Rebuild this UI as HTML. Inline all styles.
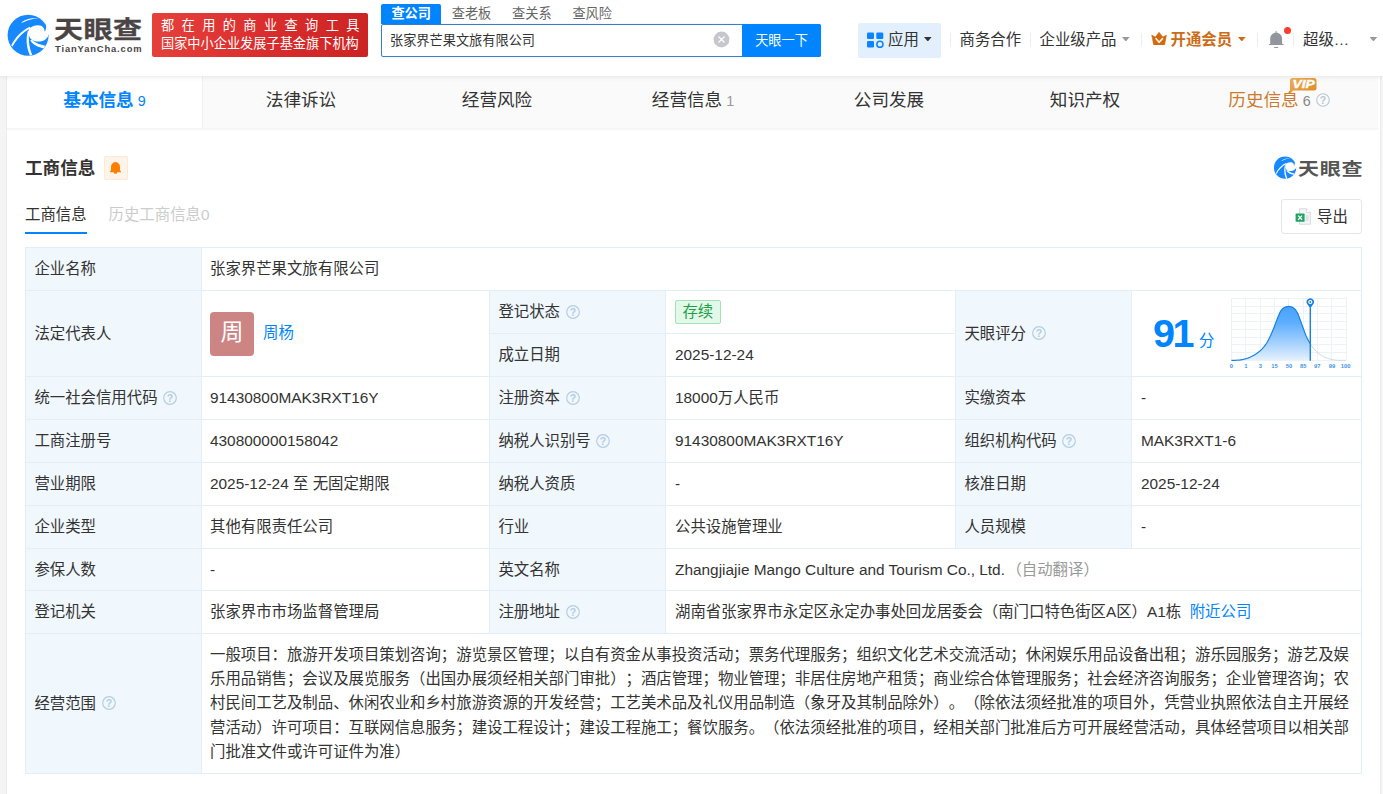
<!DOCTYPE html>
<html lang="zh-CN">
<head>
<meta charset="utf-8">
<title>张家界芒果文旅有限公司 - 天眼查</title>
<style>
*{box-sizing:border-box;margin:0;padding:0}
html,body{width:1383px;height:794px;overflow:hidden}
body{background:#f5f5f5;font-family:"Liberation Sans","Noto Sans CJK SC",sans-serif;color:#333;font-size:15.4px;position:relative;text-spacing-trim:space-all}
a{color:#0084ff;text-decoration:none}
svg{display:block}
/* header */
#hd{position:absolute;left:0;top:0;width:1383px;height:76px;background:#fff;box-shadow:0 1px 5px rgba(0,0,0,.09);z-index:5}
#logo{position:absolute;left:4px;top:10px;width:52px;height:50px}
#lt1{position:absolute;left:54px;top:9.7px;font-size:26px;line-height:40px;font-weight:700;color:#4a4444;letter-spacing:.5px;white-space:nowrap;transform-origin:0 50%;transform:scale(1.115,.9);-webkit-text-stroke:.35px #4a4444}
#lt2{position:absolute;left:55px;top:43px;font-size:9.4px;line-height:12px;font-weight:bold;color:#4a4444;letter-spacing:.86px;white-space:nowrap}
#slogan{position:absolute;left:152px;top:13px;width:216px;height:44px;border-radius:2px;background:linear-gradient(100deg,#e6413b 0%,#d92d2d 55%,#cb2323 100%);color:#fff;font-size:13.2px;line-height:17.5px;padding:4px 0 0 9px;white-space:nowrap}
#slogan .l1{letter-spacing:7.4px}
#stabs{position:absolute;left:381px;top:4px;height:20px;font-size:13.2px;line-height:20px;color:#666;white-space:nowrap}
#stabs span{display:inline-block;padding:0 10.4px;height:20px;vertical-align:top}
#stabs span.on{background:#0084ff;color:#fff;font-weight:bold;border-radius:2px 2px 0 0}
#sbox{position:absolute;left:381px;top:24px;width:440px;height:33px;border:1px solid #3a80c6;border-radius:2px;background:#fff;box-shadow:0 0 2px rgba(0,132,255,.18)}
#sbox .q{position:absolute;left:8px;top:0;line-height:32px;font-size:13.2px;color:#333}
#sbox .clr{position:absolute;left:330.5px;top:6px;width:17px;height:17px}
#sbtn{position:absolute;left:742px;top:24px;width:79px;height:33px;background:#0084ff;color:#fff;font-size:13.2px;line-height:33px;text-align:center;border-radius:0 2px 2px 0}
#app{position:absolute;left:858px;top:23px;width:83px;height:35px;background:#e2f0fd;border-radius:2px}
.it{position:absolute;top:29px;line-height:22px;white-space:nowrap;font-size:15.4px;color:#333}
.car{position:absolute;top:37.1px;width:7.6px;height:4.4px;background:#999;clip-path:polygon(0 0,100% 0,50% 100%)}
.vsep{position:absolute;top:33px;width:1px;height:13px;background:#eaecf1}
/* main */
#main{position:absolute;left:7px;top:76px;width:1373px;height:718px;background:#fff;box-shadow:-1px 0 0 #ececec,1px 0 0 #ececec}
#tabs{position:absolute;left:0;top:0;width:1371px;height:54px;background:#fafafa;border-bottom:2px solid #f6f6f6}
#tabs .t{position:absolute;top:0;width:196px;height:52px;line-height:49px;font-size:17.6px;color:#333;white-space:nowrap;text-align:center}
#tabs .t.on{background:#fff;color:#0084ff;font-weight:bold;border-right:1px solid #f0f0f0}
#tabs .n{font-size:14.3px;color:#999;font-weight:normal;margin-left:4px}
#tabs .t.on .n{color:#0084ff}
h2{position:absolute;left:18px;top:80px;font-size:17.6px;line-height:24px;font-weight:bold;color:#333}
#bell{position:absolute;left:97px;top:80px;width:24px;height:24px;background:#fff4ea;border:1px solid #fdead6;border-radius:2px}
#wm{position:absolute;left:1266px;top:80px;width:90px;height:24px}
#sub{position:absolute;left:18px;top:127px;font-size:15.4px;line-height:24px;white-space:nowrap}
#sub .a{color:#333;display:inline-block;position:relative;height:31px}
#sub .a:after{content:"";position:absolute;left:0;right:0;bottom:0;height:2px;background:#0084ff}
#sub .b{color:#ccc;margin-left:22px}
#exp{position:absolute;left:1274px;top:123px;width:81px;height:35px;border:1px solid #e3e6eb;border-radius:3px;background:#fff;font-size:15.4px;line-height:33px;color:#333}
#exp span{position:absolute;left:35px;top:0}
#exp svg{position:absolute;left:13px;top:8px}
/* table */
table{position:absolute;left:18px;top:171px;width:1336px;border-collapse:collapse;table-layout:fixed;font-size:15.4px;color:#333}
td{border:1px solid #e4eef6;height:43px;padding:0 9px;vertical-align:middle;line-height:22px;white-space:nowrap}
td.k{background:#f0f7fd;padding-left:8.4px}
td.v2{padding-left:8px}
tr.h42 td{height:42px}
.qm{display:inline-block;width:14px;height:14px;vertical-align:middle;margin-left:5.6px;position:relative;top:-1px}
.ava{display:inline-block;width:44px;height:44px;border-radius:4px;background:#cd8584;color:#fff;font-size:23px;line-height:41px;text-align:center;vertical-align:middle}
.st{display:inline-block;height:24px;line-height:22px;padding:0 6.4px;border:1px solid #a5e0b6;background:#e2f8e8;color:#219f46;border-radius:2px;font-size:15.4px}
.g{color:#999;margin-left:1.5px}
#score{position:relative;padding:0}
#sc91{position:absolute;left:21px;top:19px;font-size:39.6px;line-height:46px;font-weight:bold;color:#0084ff;letter-spacing:-2.5px}
#scf{position:absolute;left:67px;top:39px;font-size:15.4px;line-height:22px;color:#0084ff}
#chart{position:absolute;left:93px;top:1px}
</style>
</head>
<body>
<div id="hd">
  <svg id="logo" viewBox="0 0 826 794">
    <circle cx="383" cy="400" r="326" fill="#1888ff"/>
    <g fill="#fff">
      <path d="M395,300 C440,255 520,225 590,250 C625,265 645,305 648,345 C668,310 672,280 668,250 L740,250 L740,386 L712,384 C700,440 650,490 570,500 C480,510 410,470 398,410 C392,370 392,330 395,300Z"/>
      <path d="M115,560 C175,440 280,325 410,266 L417,294 C300,352 202,462 133,584Z"/>
      <path d="M413,724 C368,620 338,500 378,330 L402,330 C382,480 402,600 449,712Z"/>
      <path d="M635,607 C550,595 465,555 415,480 L450,478 C495,525 575,555 655,568Z"/>
      <path d="M270,198 C350,140 460,118 560,128 C470,135 380,160 300,200Z"/>
    </g>
  </svg>
  <div id="lt1">天眼查</div>
  <div id="lt2">TianYanCha.com</div>
  <div id="slogan"><div class="l1">都在用的商业查询工具</div><div class="l2">国家中小企业发展子基金旗下机构</div></div>
  <div id="stabs"><span class="on">查公司</span><span>查老板</span><span>查关系</span><span>查风险</span></div>
  <div id="sbox"><span class="q">张家界芒果文旅有限公司</span><svg class="clr" viewBox="0 0 17 17"><circle cx="8.5" cy="8.5" r="7.9" fill="#c6c7cc"/><path d="M5.5 5.5l6 6M11.5 5.5l-6 6" stroke="#fff" stroke-width="1.2"/></svg></div>
  <div id="sbtn">天眼一下</div>
  <div id="app"></div>
  <svg style="position:absolute;left:867px;top:32px" width="17" height="16" viewBox="0 0 17 16"><rect x="0" y="0.5" width="7" height="6.6" rx="1.3" fill="#0a84ff"/><rect x="9.3" y="0.5" width="7" height="6.6" rx="1.3" fill="#0a84ff"/><rect x="0" y="8.9" width="7" height="6.6" rx="1.3" fill="#0a84ff"/><circle cx="12.9" cy="12.3" r="3.05" fill="none" stroke="#0a84ff" stroke-width="1.55"/></svg>
  <div class="it" style="left:888px">应用</div>
  <div class="car" style="left:924px;background:#333"></div>
  <div class="vsep" style="left:950px"></div>
  <div class="it" style="left:959.5px">商务合作</div>
  <div class="vsep" style="left:1030px"></div>
  <div class="it" style="left:1039.5px">企业级产品</div>
  <div class="car" style="left:1122px"></div>
  <div class="vsep" style="left:1141px"></div>
  <svg style="position:absolute;left:1150.5px;top:32px" width="16" height="13" viewBox="0 0 16 13"><path d="M0.7,3.1 L4.3,5 L8.05,0.2 L11.9,5 L15.5,3.1 L13.55,12.95 L2.65,12.95Z" fill="#d2690e" stroke="#d2690e" stroke-width=".5" stroke-linejoin="round"/><path d="M4.9,6.6 L8.1,10.3 L11.5,6.6" fill="none" stroke="#fff6e6" stroke-width="1.6" stroke-linecap="round" stroke-linejoin="round"/></svg>
  <div class="it" style="left:1170.5px;color:#cc6c16;font-weight:bold">开通会员</div>
  <div class="car" style="left:1238px;background:#cc6c16"></div>
  <div class="vsep" style="left:1257px"></div>
  <svg style="position:absolute;left:1268px;top:30px" width="17" height="19" viewBox="0 0 17 19"><g fill="#92969c"><rect x="7.6" y="1" width="1.1" height="2.4" rx=".5"/><path d="M2.2,14.3 L2.2,9 C2.2,5 4.7,2.7 8.15,2.7 C11.6,2.7 14.1,5 14.1,9 L14.1,14.3Z"/><rect x=".8" y="14" width="14.9" height="1" rx=".5"/><rect x="6" y="17.1" width="4.3" height=".8" rx=".4"/></g></svg>
  <div style="position:absolute;left:1284px;top:27px;width:7px;height:7px;border-radius:50%;background:#ff3b30"></div>
  <div class="vsep" style="left:1293px"></div>
  <div class="it" style="left:1303px">超级…</div>
  <div class="car" style="left:1369.6px"></div>
</div>
<div id="main">
  <div id="tabs">
    <div class="t on" style="left:0">基本信息<span class="n">9</span></div>
    <div class="t" style="left:196px">法律诉讼</div>
    <div class="t" style="left:392px">经营风险</div>
    <div class="t" style="left:588px">经营信息<span class="n">1</span></div>
    <div class="t" style="left:784px">公司发展</div>
    <div class="t" style="left:980px">知识产权</div>
    <div class="t" style="left:1174px;color:#cc7a2e">历史信息<span class="n" style="color:#888">6</span><svg class="qm" style="margin-left:5px" viewBox="0 0 14 14"><circle cx="7" cy="7" r="6.3" fill="none" stroke="#b9c6d3" stroke-width="1.1"/><text x="7" y="10.7" font-size="10.5" font-weight="bold" text-anchor="middle" fill="#b9c6d3" font-family="Liberation Sans, sans-serif">?</text></svg></div>
    <svg style="position:absolute;left:1282px;top:1px" width="30" height="18" viewBox="0 0 30 18"><defs><linearGradient id="vg" x1="0" y1="0" x2="1" y2="1"><stop offset="0" stop-color="#f0ad55"/><stop offset="1" stop-color="#dc8a28"/></linearGradient></defs><path d="M3.5,1 H25 Q27.5,1 27.5,3.5 V11 Q27.5,13.5 25,13.5 H4.5 L1,16.5 V3.5 Q1,1 3.5,1Z" fill="url(#vg)"/><text x="3.6" y="11.4" font-size="11" font-weight="bold" font-style="italic" textLength="22" lengthAdjust="spacingAndGlyphs" fill="#fff" stroke="#fff" stroke-width=".4" font-family="Liberation Sans, sans-serif">VIP</text></svg>
  </div>
  <h2>工商信息</h2>
  <div id="bell"><svg width="22" height="22" viewBox="0 0 22 22"><path d="M10.5,4.9 C13.5,5.2 15,7.3 15,10 L15,13.3 L16,14.5 L16,15.3 L12.3,15.3 C12.1,16.3 11.4,16.8 10.5,16.8 C9.6,16.8 8.9,16.3 8.7,15.3 L5,15.3 L5,14.5 L6,13.3 L6,10 C6,7.3 7.5,5.2 10.5,4.9Z" fill="#ff8000"/></svg></div>
  <div id="wm">
    <svg style="position:absolute;left:-1.2px;top:-1.7px" width="28.2" height="27.1" viewBox="0 0 826 794">
      <circle cx="383" cy="400" r="326" fill="#1888ff"/>
      <g fill="#fff">
        <path d="M395,300 C440,255 520,225 590,250 C625,265 645,305 648,345 C668,310 672,280 668,250 L740,250 L740,386 L712,384 C700,440 650,490 570,500 C480,510 410,470 398,410 C392,370 392,330 395,300Z"/>
        <path d="M115,560 C175,440 280,325 410,266 L417,294 C300,352 202,462 133,584Z"/>
        <path d="M413,724 C368,620 338,500 378,330 L402,330 C382,480 402,600 449,712Z"/>
        <path d="M635,607 C550,595 465,555 415,480 L450,478 C495,525 575,555 655,568Z"/>
        <path d="M270,198 C350,140 460,118 560,128 C470,135 380,160 300,200Z"/>
      </g>
    </svg>
    <div style="position:absolute;left:24.6px;top:-1px;font-size:19.4px;line-height:28px;font-weight:700;color:#555;white-space:nowrap;letter-spacing:.6px;transform-origin:0 50%;transform:scale(1.085,.9)">天眼查</div>
  </div>
  <div id="sub"><span class="a">工商信息</span><span class="b">历史工商信息0</span></div>
  <div id="exp"><svg width="17" height="17" viewBox="0 0 17 17"><path d="M4.5,0.8 H11.6 L15.4,4.6 V16.2 H4.5Z" fill="#f4f5f7" stroke="#d3d6db" stroke-width=".9"/><path d="M11.6,0.8 V4.6 H15.4" fill="#fff" stroke="#d3d6db" stroke-width=".9"/><path d="M10.6,8 h3M10.6,10 h3M10.6,12 h3" stroke="#c9ccd2" stroke-width=".9"/><rect x="0.6" y="5.6" width="9" height="8.2" rx=".6" fill="#1fa463"/><path d="M3.2,7.6 L7,11.8 M7,7.6 L3.2,11.8" stroke="#fff" stroke-width="1.3"/></svg><span>导出</span></div>
  <table>
    <colgroup><col style="width:176px"><col style="width:288px"><col style="width:176px"><col style="width:290px"><col style="width:176px"><col style="width:230px"></colgroup>
    <tr><td class="k">企业名称</td><td class="v2" colspan="5">张家界芒果文旅有限公司</td></tr>
    <tr><td class="k" rowspan="2">法定代表人</td><td class="v2" rowspan="2"><span class="ava">周</span><a style="margin-left:9px">周杨</a></td><td class="k">登记状态<svg class="qm" viewBox="0 0 14 14"><circle cx="7" cy="7" r="6.3" fill="none" stroke="#b5cde6" stroke-width="1.2"/><text x="7" y="10.7" font-size="10.5" font-weight="bold" text-anchor="middle" fill="#b5cde6" font-family="Liberation Sans, sans-serif">?</text></svg></td><td><span class="st">存续</span></td><td class="k" rowspan="2">天眼评分<svg class="qm" viewBox="0 0 14 14"><circle cx="7" cy="7" r="6.3" fill="none" stroke="#b5cde6" stroke-width="1.2"/><text x="7" y="10.7" font-size="10.5" font-weight="bold" text-anchor="middle" fill="#b5cde6" font-family="Liberation Sans, sans-serif">?</text></svg></td><td rowspan="2" id="score"><div style="position:relative;height:85px"><div id="sc91">91</div><div id="scf">分</div><svg id="chart" width="130" height="82" viewBox="0 0 130 82">
<defs><linearGradient id="cg" gradientUnits="userSpaceOnUse" x1="0" y1="13.9" x2="0" y2="68.4"><stop offset="0" stop-color="#46a1ff"/><stop offset=".3" stop-color="#5dadff"/><stop offset=".7" stop-color="#a9d3fd"/><stop offset="1" stop-color="#e6f1fd"/></linearGradient></defs>
<path d="M6.50,6.00 V69.00 M20.50,6.00 V69.00 M35.50,6.00 V69.00 M49.50,6.00 V69.00 M63.50,6.00 V69.00 M78.50,6.00 V69.00 M92.50,6.00 V69.00 M106.50,6.00 V69.00 M121.50,6.00 V69.00 M6.00,6.50 H122.00 M6.00,14.50 H122.00 M6.00,21.50 H122.00 M6.00,29.50 H122.00 M6.00,37.50 H122.00 M6.00,45.50 H122.00 M6.00,52.50 H122.00 M6.00,60.50 H122.00 M6.00,68.50 H122.00" stroke="#ebf2fa" stroke-width="1" fill="none"/>
<path d="M6.40,68.35 L6.90,68.35 L7.40,68.35 L7.90,68.34 L8.40,68.33 L8.90,68.32 L9.40,68.31 L9.90,68.29 L10.40,68.28 L10.90,68.26 L11.40,68.24 L11.90,68.22 L12.40,68.20 L12.90,68.17 L13.40,68.15 L13.90,68.12 L14.40,68.07 L14.90,68.02 L15.40,67.95 L15.90,67.87 L16.40,67.79 L16.90,67.69 L17.40,67.59 L17.90,67.48 L18.40,67.37 L18.90,67.25 L19.40,67.12 L19.90,66.99 L20.40,66.86 L20.90,66.73 L21.40,66.59 L21.90,66.44 L22.40,66.28 L22.90,66.11 L23.40,65.92 L23.90,65.72 L24.40,65.50 L24.90,65.28 L25.40,65.05 L25.90,64.80 L26.40,64.55 L26.90,64.30 L27.40,64.03 L27.90,63.77 L28.40,63.50 L28.90,63.22 L29.40,62.93 L29.90,62.63 L30.40,62.32 L30.90,62.00 L31.40,61.66 L31.90,61.31 L32.40,60.96 L32.90,60.58 L33.40,60.20 L33.90,59.80 L34.40,59.39 L34.90,58.97 L35.40,58.53 L35.90,58.08 L36.40,57.61 L36.90,57.11 L37.40,56.58 L37.90,56.03 L38.40,55.46 L38.90,54.86 L39.40,54.23 L39.90,53.58 L40.40,52.90 L40.90,52.20 L41.40,51.48 L41.90,50.70 L42.40,49.85 L42.90,48.95 L43.40,48.01 L43.90,47.03 L44.40,46.02 L44.90,44.99 L45.40,43.94 L45.90,42.87 L46.40,41.76 L46.90,40.61 L47.40,39.42 L47.90,38.21 L48.40,36.98 L48.90,35.73 L49.40,34.48 L49.90,33.20 L50.40,31.85 L50.90,30.47 L51.40,29.09 L51.90,27.73 L52.40,26.44 L52.90,25.23 L53.40,24.01 L53.90,22.80 L54.40,21.65 L54.90,20.58 L55.40,19.66 L55.90,18.90 L56.40,18.21 L56.90,17.58 L57.40,17.00 L57.90,16.50 L58.40,16.09 L58.90,15.77 L59.40,15.51 L59.90,15.29 L60.40,15.08 L60.90,14.91 L61.40,14.78 L61.90,14.67 L62.40,14.59 L62.90,14.51 L63.40,14.46 L63.90,14.46 L64.40,14.49 L64.90,14.55 L65.40,14.63 L65.90,14.73 L66.40,14.85 L66.90,15.03 L67.40,15.28 L67.90,15.58 L68.40,15.93 L68.90,16.30 L69.40,16.71 L69.90,17.20 L70.40,17.79 L70.90,18.46 L71.40,19.21 L71.90,20.01 L72.40,20.87 L72.90,21.90 L73.40,23.08 L73.90,24.38 L74.40,25.74 L74.90,27.12 L75.40,28.47 L75.90,29.82 L76.40,31.21 L76.90,32.63 L77.40,34.05 L77.90,35.43 L78.40,36.78 L78.90,38.15 L79.40,39.51 L79.90,40.86 L80.40,42.16 L80.90,43.40 L81.40,44.55 L81.90,45.61 L82.40,46.61 L82.90,47.55 L83.40,48.46 L83.90,49.33 L84.40,50.18 L84.90,51.00 L85.29,51.63 L85.29,68.35 L6.40,68.35Z" fill="url(#cg)"/>
<path d="M85.29,51.63 L85.79,52.43 L86.29,53.23 L86.79,54.01 L87.29,54.76 L87.79,55.48 L88.29,56.15 L88.79,56.78 L89.29,57.36 L89.79,57.91 L90.29,58.44 L90.79,58.94 L91.29,59.41 L91.79,59.87 L92.29,60.30 L92.79,60.71 L93.29,61.13 L93.79,61.54 L94.29,61.94 L94.79,62.33 L95.29,62.71 L95.79,63.07 L96.29,63.43 L96.79,63.76 L97.29,64.08 L97.79,64.37 L98.29,64.65 L98.79,64.90 L99.29,65.12 L99.79,65.33 L100.29,65.54 L100.79,65.73 L101.29,65.92 L101.79,66.10 L102.29,66.27 L102.79,66.44 L103.29,66.59 L103.79,66.74 L104.29,66.88 L104.79,67.01 L105.29,67.13 L105.79,67.25 L106.29,67.35 L106.79,67.45 L107.29,67.54 L107.79,67.64 L108.29,67.73 L108.79,67.82 L109.29,67.91 L109.79,68.00 L110.29,68.08 L110.79,68.15 L111.29,68.21 L111.79,68.26 L112.29,68.30 L112.79,68.33 L113.29,68.35 L113.79,68.35 L114.29,68.35 L114.79,68.35 L115.29,68.35 L115.79,68.35 L116.29,68.35 L116.79,68.35 L117.29,68.35 L117.79,68.35 L118.29,68.35 L118.79,68.35 L119.29,68.35 L119.79,68.35 L120.29,68.35 L120.79,68.35 L121.01,68.35" fill="none" stroke="#c9d3de" stroke-width="1"/>
<path d="M6.40,68.35 L6.90,68.35 L7.40,68.35 L7.90,68.34 L8.40,68.33 L8.90,68.32 L9.40,68.31 L9.90,68.29 L10.40,68.28 L10.90,68.26 L11.40,68.24 L11.90,68.22 L12.40,68.20 L12.90,68.17 L13.40,68.15 L13.90,68.12 L14.40,68.07 L14.90,68.02 L15.40,67.95 L15.90,67.87 L16.40,67.79 L16.90,67.69 L17.40,67.59 L17.90,67.48 L18.40,67.37 L18.90,67.25 L19.40,67.12 L19.90,66.99 L20.40,66.86 L20.90,66.73 L21.40,66.59 L21.90,66.44 L22.40,66.28 L22.90,66.11 L23.40,65.92 L23.90,65.72 L24.40,65.50 L24.90,65.28 L25.40,65.05 L25.90,64.80 L26.40,64.55 L26.90,64.30 L27.40,64.03 L27.90,63.77 L28.40,63.50 L28.90,63.22 L29.40,62.93 L29.90,62.63 L30.40,62.32 L30.90,62.00 L31.40,61.66 L31.90,61.31 L32.40,60.96 L32.90,60.58 L33.40,60.20 L33.90,59.80 L34.40,59.39 L34.90,58.97 L35.40,58.53 L35.90,58.08 L36.40,57.61 L36.90,57.11 L37.40,56.58 L37.90,56.03 L38.40,55.46 L38.90,54.86 L39.40,54.23 L39.90,53.58 L40.40,52.90 L40.90,52.20 L41.40,51.48 L41.90,50.70 L42.40,49.85 L42.90,48.95 L43.40,48.01 L43.90,47.03 L44.40,46.02 L44.90,44.99 L45.40,43.94 L45.90,42.87 L46.40,41.76 L46.90,40.61 L47.40,39.42 L47.90,38.21 L48.40,36.98 L48.90,35.73 L49.40,34.48 L49.90,33.20 L50.40,31.85 L50.90,30.47 L51.40,29.09 L51.90,27.73 L52.40,26.44 L52.90,25.23 L53.40,24.01 L53.90,22.80 L54.40,21.65 L54.90,20.58 L55.40,19.66 L55.90,18.90 L56.40,18.21 L56.90,17.58 L57.40,17.00 L57.90,16.50 L58.40,16.09 L58.90,15.77 L59.40,15.51 L59.90,15.29 L60.40,15.08 L60.90,14.91 L61.40,14.78 L61.90,14.67 L62.40,14.59 L62.90,14.51 L63.40,14.46 L63.90,14.46 L64.40,14.49 L64.90,14.55 L65.40,14.63 L65.90,14.73 L66.40,14.85 L66.90,15.03 L67.40,15.28 L67.90,15.58 L68.40,15.93 L68.90,16.30 L69.40,16.71 L69.90,17.20 L70.40,17.79 L70.90,18.46 L71.40,19.21 L71.90,20.01 L72.40,20.87 L72.90,21.90 L73.40,23.08 L73.90,24.38 L74.40,25.74 L74.90,27.12 L75.40,28.47 L75.90,29.82 L76.40,31.21 L76.90,32.63 L77.40,34.05 L77.90,35.43 L78.40,36.78 L78.90,38.15 L79.40,39.51 L79.90,40.86 L80.40,42.16 L80.90,43.40 L81.40,44.55 L81.90,45.61 L82.40,46.61 L82.90,47.55 L83.40,48.46 L83.90,49.33 L84.40,50.18 L84.90,51.00 L85.29,51.63" fill="none" stroke="#1b7fe0" stroke-width="1.2"/>
<path d="M85.29,15.49 V68.65" stroke="#1b7fe0" stroke-width="1.4"/>
<path d="M85.29,16.21 L82.19,12.02 A3.7,3.7 0 1 1 88.39,12.02Z" fill="#1b7fe0"/>
<circle cx="85.29" cy="10.02" r="2.1" fill="#fff"/><circle cx="85.29" cy="10.02" r=".9" fill="#1b7fe0"/>
<g font-size="5.8" font-weight="bold" fill="#3d94ee" text-anchor="middle" font-family="Liberation Sans, sans-serif"><text x="6.4" y="76.3">0</text><text x="20.9" y="76.3">1</text><text x="35.4" y="76.3">3</text><text x="49.4" y="76.3">15</text><text x="64.0" y="76.3">50</text><text x="78.2" y="76.3">85</text><text x="92.2" y="76.3">97</text><text x="106.9" y="76.3">99</text><text x="120.6" y="76.3">100</text></g>
</svg></div></td></tr>
    <tr><td class="k">成立日期</td><td>2025-12-24</td></tr>
    <tr><td class="k">统一社会信用代码<svg class="qm" viewBox="0 0 14 14"><circle cx="7" cy="7" r="6.3" fill="none" stroke="#b5cde6" stroke-width="1.2"/><text x="7" y="10.7" font-size="10.5" font-weight="bold" text-anchor="middle" fill="#b5cde6" font-family="Liberation Sans, sans-serif">?</text></svg></td><td class="v2">91430800MAK3RXT16Y</td><td class="k">注册资本<svg class="qm" viewBox="0 0 14 14"><circle cx="7" cy="7" r="6.3" fill="none" stroke="#b5cde6" stroke-width="1.2"/><text x="7" y="10.7" font-size="10.5" font-weight="bold" text-anchor="middle" fill="#b5cde6" font-family="Liberation Sans, sans-serif">?</text></svg></td><td>18000万人民币</td><td class="k">实缴资本</td><td>-</td></tr>
    <tr><td class="k">工商注册号</td><td class="v2">430800000158042</td><td class="k">纳税人识别号<svg class="qm" viewBox="0 0 14 14"><circle cx="7" cy="7" r="6.3" fill="none" stroke="#b5cde6" stroke-width="1.2"/><text x="7" y="10.7" font-size="10.5" font-weight="bold" text-anchor="middle" fill="#b5cde6" font-family="Liberation Sans, sans-serif">?</text></svg></td><td>91430800MAK3RXT16Y</td><td class="k">组织机构代码<svg class="qm" viewBox="0 0 14 14"><circle cx="7" cy="7" r="6.3" fill="none" stroke="#b5cde6" stroke-width="1.2"/><text x="7" y="10.7" font-size="10.5" font-weight="bold" text-anchor="middle" fill="#b5cde6" font-family="Liberation Sans, sans-serif">?</text></svg></td><td>MAK3RXT1-6</td></tr>
    <tr><td class="k">营业期限</td><td class="v2">2025-12-24 至 无固定期限</td><td class="k">纳税人资质</td><td>-</td><td class="k">核准日期</td><td>2025-12-24</td></tr>
    <tr><td class="k">企业类型</td><td class="v2">其他有限责任公司</td><td class="k">行业</td><td>公共设施管理业</td><td class="k">人员规模</td><td>-</td></tr>
    <tr class="h42"><td class="k">参保人数</td><td class="v2">-</td><td class="k">英文名称</td><td colspan="3">Zhangjiajie Mango Culture and Tourism Co., Ltd.<span class="g">（自动翻译）</span></td></tr>
    <tr><td class="k">登记机关</td><td class="v2">张家界市市场监督管理局</td><td class="k">注册地址<svg class="qm" viewBox="0 0 14 14"><circle cx="7" cy="7" r="6.3" fill="none" stroke="#b5cde6" stroke-width="1.2"/><text x="7" y="10.7" font-size="10.5" font-weight="bold" text-anchor="middle" fill="#b5cde6" font-family="Liberation Sans, sans-serif">?</text></svg></td><td colspan="3">湖南省张家界市永定区永定办事处回龙居委会（南门口特色街区A区）A1栋<a style="margin-left:8.5px">附近公司</a></td></tr>
    <tr><td class="k" style="height:140px">经营范围<svg class="qm" viewBox="0 0 14 14"><circle cx="7" cy="7" r="6.3" fill="none" stroke="#b5cde6" stroke-width="1.2"/><text x="7" y="10.7" font-size="10.5" font-weight="bold" text-anchor="middle" fill="#b5cde6" font-family="Liberation Sans, sans-serif">?</text></svg></td><td class="v2" colspan="5" style="line-height:24.2px;white-space:normal">一般项目：旅游开发项目策划咨询；游览景区管理；以自有资金从事投资活动；票务代理服务；组织文化艺术交流活动；休闲娱乐用品设备出租；游乐园服务；游艺及娱乐用品销售；会议及展览服务（出国办展须经相关部门审批）；酒店管理；物业管理；非居住房地产租赁；商业综合体管理服务；社会经济咨询服务；企业管理咨询；农村民间工艺及制品、休闲农业和乡村旅游资源的开发经营；工艺美术品及礼仪用品制造（象牙及其制品除外）。（除依法须经批准的项目外，凭营业执照依法自主开展经营活动）许可项目：互联网信息服务；建设工程设计；建设工程施工；餐饮服务。（依法须经批准的项目，经相关部门批准后方可开展经营活动，具体经营项目以相关部门批准文件或许可证件为准）</td></tr>
  </table>
</div>
</body>
</html>
